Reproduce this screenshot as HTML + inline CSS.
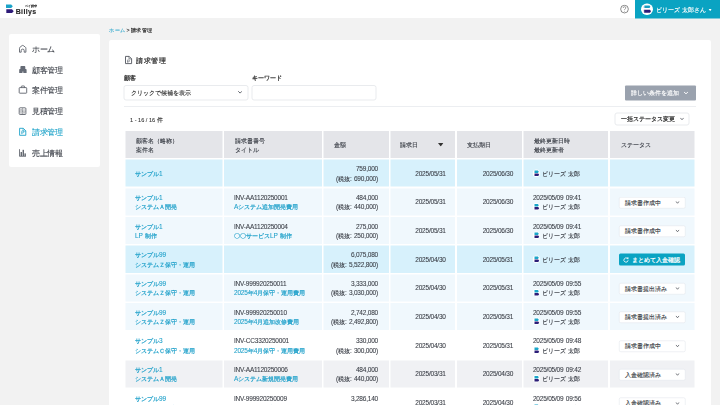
<!DOCTYPE html>
<html><head><meta charset="utf-8">
<style>
*{box-sizing:border-box;margin:0;padding:0}
html,body{width:720px;height:405px;overflow:hidden}
#root{position:absolute;left:0;top:0;width:1440px;height:810px;transform:scale(0.5);transform-origin:0 0}
body{background:#f2f2f2;font-family:"Liberation Sans",sans-serif;color:#3b3f47;position:relative;-webkit-text-stroke:0.16px currentColor}
i.j{font-style:normal;-webkit-text-stroke:0.28px currentColor}
.abs{position:absolute}
#hdr{left:0;top:0;width:1440px;height:36px;background:#fff;box-shadow:0 0.6px 3px rgba(0,0,0,.035)}
#user{left:1270px;top:0;width:170px;height:37px;background:#0aa3c2;color:#fff}
#side{left:18px;top:68px;width:182px;height:266px;background:#fff;border-radius:4px}
.nav{position:absolute;left:20px;height:20px;font-size:15px;line-height:20px;color:#3b3f47;white-space:nowrap}
.nav svg{position:absolute;left:0;top:3px}
.nav span{position:absolute;left:26.4px;top:0}
.nav i.j{-webkit-text-stroke:0.2px currentColor}
#crumb{left:218px;top:51.2px;font-size:10.6px;line-height:18px;white-space:nowrap;color:#333}
#crumb i.j{-webkit-text-stroke:0.32px currentColor}
#crumb b i.j{-webkit-text-stroke:0.2px currentColor}
#crumb b{color:#2ba6cb;font-weight:normal}
#main{left:218px;top:80px;width:1204px;height:760px;background:#fff;border-radius:4px}
.lbl{font-size:11.6px;line-height:16px;color:#3a3a3a;-webkit-text-stroke:0.5px currentColor;white-space:nowrap}
.box{background:#fff;border:2px solid #e9ebee;border-radius:5px}
.ttl i.j{-webkit-text-stroke:0.4px currentColor}
.lbl i.j{-webkit-text-stroke:0.6px currentColor}
.t{position:absolute;white-space:nowrap}
.row{position:absolute;left:250.6px;width:1138.2px}
.cell{position:absolute;top:0;height:100%}
.c1{left:0;width:194.8px}
.c2{left:197.8px;width:195.2px}
.c3{left:396.4px;width:130.6px}
.c4{left:530.2px;width:129.4px}
.c5{left:663.2px;width:130.6px}
.c6{left:796.8px;width:168.8px}
.c7{left:969px;width:169.2px}
.hd .cell{background:#e4e5e9}
.g1 .cell{background:#d7f1fc}
.g2 .cell{background:#f0f8fd}
.g3 .cell{background:#fff}
.g4 .cell{background:#f0f1f4}
.tx{position:absolute;font-size:13px;line-height:18.8px;white-space:nowrap;letter-spacing:-0.4px;word-spacing:1.6px}
.tx i.j{font-size:12px;letter-spacing:0}
.tl{color:#20a1ca}
.tl i.j{-webkit-text-stroke:0.4px currentColor}
.r{text-align:right}
.sel{position:absolute;left:18.2px;width:132.8px;height:23px;background:#fff;border:1.8px solid #dfe3e8;border-radius:3.6px;font-size:12px;line-height:20.6px;color:#3b3f47;padding-left:12px;white-space:nowrap}
.sel svg{position:absolute;right:11px;top:8.4px}
.av{position:absolute}
.sel2 i.j{-webkit-text-stroke:0.44px currentColor}
.btx i.j{-webkit-text-stroke:0.4px currentColor}
.sel i.j{-webkit-text-stroke:0.28px currentColor}
</style></head><body><div id="root">

<div id="hdr" class="abs">
  <svg class="abs" style="left:0;top:0" width="30" height="30" viewBox="0 0 15 15">
    <path d="M6 4.4 H11.2 L12.8 6.25 L11.2 8.1 H6.3 Q6 8.1 6 7.8Z" fill="#1aa3c8"/>
    <path d="M6.3 9.3 H12 L13.7 11.2 L12 13.1 H6.6 Q6.3 13.1 6.3 12.8Z" fill="#2d1a78"/>
  </svg>
  <div class="t" style="left:31.4px;top:13.8px;font-size:14px;line-height:16px;font-weight:bold;color:#222;letter-spacing:0.72px">Billys</div>
  <div class="t" style="left:50px;top:9.2px;font-size:6px;line-height:7px;color:#222;-webkit-text-stroke:0.1px #222"><i class="j">ベイ請求</i></div>
  <svg class="abs" style="left:1239.2px;top:9.2px" width="20" height="20" viewBox="0 0 10 10">
    <circle cx="5" cy="4.6" r="3.85" fill="none" stroke="#666" stroke-width="0.75"/>
    <path d="M3.7 3.5 Q3.7 2.2 5 2.2 Q6.3 2.2 6.3 3.4 Q6.3 4.1 5.5 4.5 Q5 4.8 5 5.6" fill="none" stroke="#666" stroke-width="0.6"/>
    <circle cx="5" cy="6.7" r="0.42" fill="#666"/>
  </svg>
</div>
<div id="user" class="abs">
  <div class="abs" style="left:12px;top:6.6px;width:23.6px;height:23.6px;border-radius:50%;background:#fff"></div>
  <svg class="abs" style="left:0;top:0" width="36" height="36" viewBox="0 0 18 18">
    <path d="M9.4 5.4 H14.5 L15.4 6.75 L14.5 8.1 H9.4Z" fill="#1a9dc0"/>
    <path d="M9.1 9.7 H15 L16 11.2 L15 12.7 H9.1Z" fill="#2d1a78"/>
    <path d="M8.4 6.3 H9.5 V8.1 H8.6Z M8.3 9.7 H9.2 V12.4 H8.7Z" fill="#8fb4c6" opacity=".6"/>
  </svg>
  <div class="t" style="left:41.2px;top:11.6px;font-size:11.5px;line-height:16px;color:#fff;-webkit-text-stroke:0.6px #fff"><i class="j">ビリーズ</i><span style="display:inline-block;width:5.2px"></span><i class="j">太郎さん</i></div>
  <svg class="abs" style="left:146.6px;top:18px" width="6.8" height="4.2" viewBox="0 0 4 2.5"><path d="M0 0H4L2 2.5Z" fill="#fff"/></svg>
</div>

<div id="side" class="abs">
  <div class="nav" style="top:21px"><span><i class="j">ホーム</i></span></div>
  <div class="nav" style="top:62.4px"><span><i class="j">顧客管理</i></span></div>
  <div class="nav" style="top:102.8px"><span><i class="j">案件管理</i></span></div>
  <div class="nav" style="top:145.4px"><span><i class="j">見積管理</i></span></div>
  <div class="nav" style="top:186.8px;color:#1ea3c9"><span><i class="j">請求管理</i></span></div>
  <div class="nav" style="top:228.6px"><span><i class="j">売上情報</i></span></div>
</div>

<svg class="abs" style="left:0;top:0" width="80" height="340" viewBox="0 0 40 170">
  <path d="M19.5 52.2 V48.3 Q19.5 47.6 20.1 47.1 L22.1 45.6 Q22.7 45.2 23.3 45.6 L25.3 47.1 Q25.9 47.6 25.9 48.3 V52.2 H24.2 V50.6 Q24.2 49.1 22.7 49.1 Q21.2 49.1 21.2 50.6 V52.2Z" fill="none" stroke="#555a63" stroke-width="0.85" stroke-linejoin="round"/>
  <path d="M20.4 69 V66.9 Q20.4 66.1 21.2 66.1 H24.5 Q25.3 66.1 25.3 66.9 V69 H25.8 Q26.6 69 26.6 69.8 V73 H23.3 V71.6 H22.5 V73 H19.2 V69.8 Q19.2 69 20 69Z" fill="#656b76"/>
  <rect x="19.2" y="87.6" width="7.5" height="5.6" rx="0.6" fill="none" stroke="#555a63" stroke-width="0.85"/>
  <path d="M21.4 87.6 V86.4 Q21.4 86 21.8 86 H24.1 Q24.5 86 24.5 86.4 V87.6" fill="none" stroke="#555a63" stroke-width="0.85"/>
  <rect x="19.2" y="107.8" width="6.7" height="6.7" rx="0.9" fill="none" stroke="#555a63" stroke-width="0.85"/>
  <path d="M22.55 108.2 V114.1 M19.6 111.15 H25.5" stroke="#555a63" stroke-width="0.5"/>
  <path d="M20.4 109.8 H21.7 M21.05 109.15 V110.45 M23.4 109.8 H24.7 M20.4 112.6 L21.7 113.3 M21.7 112.6 L20.4 113.3 M23.4 112.5 H24.7 M23.4 113.2 H24.7" stroke="#555a63" stroke-width="0.45"/>
  <path d="M19.6 128.3 H23.3 L25.8 130.8 V135.3 H19.6Z" fill="none" stroke="#1ea3c9" stroke-width="0.9" stroke-linejoin="round"/>
  <path d="M23.1 128.3 V131 H25.8" fill="none" stroke="#1ea3c9" stroke-width="0.7"/>
  <path d="M21.8 134.2 V130.9 H22.9 Q23.9 130.9 23.9 131.9 Q23.9 132.9 22.9 132.9 H21.4" fill="none" stroke="#1ea3c9" stroke-width="0.65"/>
  <path d="M19.5 149.2 V156.3 H26" fill="none" stroke="#555a63" stroke-width="0.8"/>
  <rect x="20.6" y="152" width="1.3" height="4" fill="#555a63"/>
  <rect x="22.6" y="149.8" width="1.3" height="6.2" fill="#555a63"/>
  <rect x="24.5" y="153.4" width="1.3" height="2.6" fill="#555a63"/>
</svg>
<div id="crumb" class="abs"><b><i class="j">ホーム</i></b><span style="padding:0 2.2px 0 2px">&gt;</span><i class="j">請求管理</i></div>

<div id="main" class="abs"></div>

<!-- main content, absolute page coords -->
<svg class="abs" style="left:248px;top:110px" width="18" height="20" viewBox="0 0 9 10"><path d="M1.5 1.4 H5.2 L7.6 3.8 V8.6 H1.5Z" fill="none" stroke="#5a5e66" stroke-width="0.95" stroke-linejoin="round"/><path d="M5 1.4 V3.9 H7.6" fill="none" stroke="#5a5e66" stroke-width="0.7"/><path d="M3.6 7.6 V4.9 H4.5 Q5.5 4.9 5.5 5.85 Q5.5 6.8 4.5 6.8 H3.3" fill="none" stroke="#5a5e66" stroke-width="0.6"/></svg>
<div class="t ttl" style="left:272px;top:111.2px;font-size:14.8px;line-height:20px;color:#333"><i class="j">請求管理</i></div>

<div class="t lbl" style="left:247.6px;top:148px"><i class="j">顧客</i></div>
<div class="abs box" style="left:247.2px;top:170.4px;width:250px;height:30.4px"></div>
<div class="t" style="left:261.2px;top:177px;font-size:12.4px;line-height:18px;color:#333"><i class="j">クリックで候補を表示</i></div>
<svg class="abs" style="left:475.6px;top:182.4px" width="8.4" height="5.6" viewBox="0 0 4.2 2.8"><path d="M0.5 0.5 L2.1 2.1 L3.7 0.5" fill="none" stroke="#4a4f58" stroke-width="0.85" stroke-linecap="round" stroke-linejoin="round"/></svg>

<div class="t lbl" style="left:503px;top:148px"><i class="j">キーワード</i></div>
<div class="abs box" style="left:502.6px;top:170.4px;width:250.6px;height:30.4px"></div>

<div class="abs" style="left:1250.4px;top:171.2px;width:141.2px;height:30px;background:#9aa2ae;border-radius:2px"></div>
<div class="t" style="left:1261.2px;top:177.4px;font-size:12.2px;line-height:18px;color:#fff"><i class="j">詳しい条件を追加</i></div>
<svg class="abs" style="left:1367px;top:183.2px" width="10" height="6" viewBox="0 0 5 3"><path d="M0.8 0.7 L2.5 2.3 L4.2 0.7" fill="none" stroke="#fff" stroke-width="0.95" stroke-linecap="round" stroke-linejoin="round"/></svg>

<div class="abs" style="left:248.4px;top:212px;width:1143.2px;height:1.6px;background:#eceef1"></div>

<div class="t" style="left:260px;top:229.6px;font-size:11.2px;line-height:18px;color:#333">1 - 16 / 16 <i class="j">件</i></div>
<div class="abs box" style="left:1228.6px;top:225.4px;width:150.4px;height:25.8px"></div>
<div class="t sel2" style="left:1241.2px;top:229px;font-size:12px;line-height:18px;color:#333"><i class="j">一括ステータス変更</i></div>
<svg class="abs" style="left:1360.4px;top:235.2px" width="8" height="6" viewBox="0 0 4 3"><path d="M0.55 0.6 L2 2.25 L3.45 0.6" fill="none" stroke="#3b3f47" stroke-width="0.7" stroke-linecap="round" stroke-linejoin="round"/></svg>

<div id="tbl">
<div class="row hd" style="top:262px;height:54px">
<div class="cell c1"><div class="tx" style="left:21px;top:10px"><i class="j">顧客名（略称）</i><br><i class="j">案件名</i></div></div>
<div class="cell c2"><div class="tx" style="left:22px;top:10px"><i class="j">請求書番号</i><br><i class="j">タイトル</i></div></div>
<div class="cell c3"><div class="tx" style="left:21px;top:18px"><i class="j">金額</i></div></div>
<div class="cell c4"><div class="tx" style="left:20px;top:18px"><i class="j">請求日</i></div><svg style="position:absolute;left:95.6px;top:24px" width="10.8" height="7.2" viewBox="0 0 5.4 3.6"><path d="M0 0 H5.4 L2.7 3.4Z" fill="#333"/></svg></div>
<div class="cell c5"><div class="tx" style="left:21px;top:18px"><i class="j">支払期日</i></div></div>
<div class="cell c6"><div class="tx" style="left:21px;top:10px"><i class="j">最終更新日時</i><br><i class="j">最終更新者</i></div></div>
<div class="cell c7"><div class="tx" style="left:22px;top:18px"><i class="j">ステータス</i></div></div>
</div>
<div class="row g1" style="top:319.2px;height:54.2px">
<div class="cell c1"><div class="tx tl" style="left:19.4px;top:18.4px"><i class="j">サンプル</i>1</div></div>
<div class="cell c2"></div>
<div class="cell c3"><div class="tx r" style="right:21.6px;top:9.6px">759,000<br>(<i class="j">税抜</i>: 690,000)</div></div>
<div class="cell c4"><div class="tx r" style="right:18.6px;top:18.4px">2025/05/31</div></div>
<div class="cell c5"><div class="tx r" style="right:18px;top:18.4px">2025/06/30</div></div>
<div class="cell c6"><div class="tx" style="left:36.8px;top:18.4px"><i class="j">ビリーズ</i><span style="display:inline-block;width:4.8px"></span><i class="j">太郎</i></div><svg class="av" style="left:17.8px;top:19px" width="16" height="18" viewBox="0 0 8 9"><circle cx="3.9" cy="4.3" r="3.8" fill="#fff"/><path d="M2 1.6 H5.4 L6.3 2.75 L5.4 3.9 H2Z" fill="#1aa6c9"/><path d="M2 4.5 H5.7 L6.7 5.75 L5.7 7 H2Z" fill="#2c1e78"/></svg></div>
<div class="cell c7"></div>
</div>
<div class="row g2" style="top:376.6px;height:54.2px">
<div class="cell c1"><div class="tx tl" style="left:19.4px;top:9.6px"><i class="j">サンプル</i>1<br><i class="j">システムＡ開発</i></div></div>
<div class="cell c2"><div class="tx" style="left:19.6px;top:9.6px">INV-AA1120250001<br><span class="tl">A<i class="j">システム追加開発費用</i></span></div></div>
<div class="cell c3"><div class="tx r" style="right:21.6px;top:9.6px">484,000<br>(<i class="j">税抜</i>: 440,000)</div></div>
<div class="cell c4"><div class="tx r" style="right:18.6px;top:18.4px">2025/05/31</div></div>
<div class="cell c5"><div class="tx r" style="right:18px;top:18.4px">2025/06/30</div></div>
<div class="cell c6"><div class="tx" style="left:18.4px;top:9.6px">2025/05/09 09:41<br><span style="padding-left:18.4px"><i class="j">ビリーズ</i></span><span style="display:inline-block;width:4.8px"></span><i class="j">太郎</i></div><svg class="av" style="left:17.4px;top:28px" width="16" height="18" viewBox="0 0 8 9"><circle cx="3.9" cy="4.3" r="3.8" fill="#fff"/><path d="M2 1.6 H5.4 L6.3 2.75 L5.4 3.9 H2Z" fill="#1aa6c9"/><path d="M2 4.5 H5.7 L6.7 5.75 L5.7 7 H2Z" fill="#2c1e78"/></svg></div>
<div class="cell c7"><div class="sel" style="top:17px"><i class="j">請求書作成中</i><svg style="position:absolute;right:10.8px;top:7.2px" width="8" height="6" viewBox="0 0 4 3"><path d="M0.55 0.6 L2 2.25 L3.45 0.6" fill="none" stroke="#3b3f47" stroke-width="0.7" stroke-linecap="round" stroke-linejoin="round"/></svg></div></div>
</div>
<div class="row g2" style="top:434px;height:54.2px">
<div class="cell c1"><div class="tx tl" style="left:19.4px;top:9.6px"><i class="j">サンプル</i>1<br>LP <i class="j">制作</i></div></div>
<div class="cell c2"><div class="tx" style="left:19.6px;top:9.6px">INV-AA1120250004<br><span class="tl"><i class="j">〇〇サービス</i>LP <i class="j">制作</i></span></div></div>
<div class="cell c3"><div class="tx r" style="right:21.6px;top:9.6px">275,000<br>(<i class="j">税抜</i>: 250,000)</div></div>
<div class="cell c4"><div class="tx r" style="right:18.6px;top:18.4px">2025/05/31</div></div>
<div class="cell c5"><div class="tx r" style="right:18px;top:18.4px">2025/06/30</div></div>
<div class="cell c6"><div class="tx" style="left:18.4px;top:9.6px">2025/05/09 09:41<br><span style="padding-left:18.4px"><i class="j">ビリーズ</i></span><span style="display:inline-block;width:4.8px"></span><i class="j">太郎</i></div><svg class="av" style="left:17.4px;top:28px" width="16" height="18" viewBox="0 0 8 9"><circle cx="3.9" cy="4.3" r="3.8" fill="#fff"/><path d="M2 1.6 H5.4 L6.3 2.75 L5.4 3.9 H2Z" fill="#1aa6c9"/><path d="M2 4.5 H5.7 L6.7 5.75 L5.7 7 H2Z" fill="#2c1e78"/></svg></div>
<div class="cell c7"><div class="sel" style="top:17px"><i class="j">請求書作成中</i><svg style="position:absolute;right:10.8px;top:7.2px" width="8" height="6" viewBox="0 0 4 3"><path d="M0.55 0.6 L2 2.25 L3.45 0.6" fill="none" stroke="#3b3f47" stroke-width="0.7" stroke-linecap="round" stroke-linejoin="round"/></svg></div></div>
</div>
<div class="row g1" style="top:491.4px;height:54.2px">
<div class="cell c1"><div class="tx tl" style="left:19.4px;top:9.6px"><i class="j">サンプル</i>99<br><i class="j">システムＺ保守・運用</i></div></div>
<div class="cell c2"></div>
<div class="cell c3"><div class="tx r" style="right:21.6px;top:9.6px">6,075,080<br>(<i class="j">税抜</i>: 5,522,800)</div></div>
<div class="cell c4"><div class="tx r" style="right:18.6px;top:18.4px">2025/04/30</div></div>
<div class="cell c5"><div class="tx r" style="right:18px;top:18.4px">2025/05/31</div></div>
<div class="cell c6"><div class="tx" style="left:36.8px;top:18.4px"><i class="j">ビリーズ</i><span style="display:inline-block;width:4.8px"></span><i class="j">太郎</i></div><svg class="av" style="left:17.8px;top:19px" width="16" height="18" viewBox="0 0 8 9"><circle cx="3.9" cy="4.3" r="3.8" fill="#fff"/><path d="M2 1.6 H5.4 L6.3 2.75 L5.4 3.9 H2Z" fill="#1aa6c9"/><path d="M2 4.5 H5.7 L6.7 5.75 L5.7 7 H2Z" fill="#2c1e78"/></svg></div>
<div class="cell c7"><div style="position:absolute;left:18.4px;top:15.2px;width:132px;height:24.6px;background:#0aa3c2;border-radius:3px"></div><svg style="position:absolute;left:26.8px;top:22.2px" width="12" height="12" viewBox="0 0 6 6"><path d="M4.5 1.5 A2.15 2.15 0 1 0 5.1 3.6" fill="none" stroke="#fff" stroke-width="0.8" stroke-linecap="round"/><path d="M3.5 0.6 L5.6 0.5 L5.2 2.6Z" fill="#fff"/></svg><div class="tx btx" style="left:44.8px;top:18.4px;color:#fff"><i class="j">まとめて入金確認</i></div></div>
</div>
<div class="row g2" style="top:548.8px;height:54.2px">
<div class="cell c1"><div class="tx tl" style="left:19.4px;top:9.6px"><i class="j">サンプル</i>99<br><i class="j">システムＺ保守・運用</i></div></div>
<div class="cell c2"><div class="tx" style="left:19.6px;top:9.6px">INV-999920250011<br><span class="tl">2025<i class="j">年</i>4<i class="j">月保守・運用費用</i></span></div></div>
<div class="cell c3"><div class="tx r" style="right:21.6px;top:9.6px">3,333,000<br>(<i class="j">税抜</i>: 3,030,000)</div></div>
<div class="cell c4"><div class="tx r" style="right:18.6px;top:18.4px">2025/04/30</div></div>
<div class="cell c5"><div class="tx r" style="right:18px;top:18.4px">2025/05/31</div></div>
<div class="cell c6"><div class="tx" style="left:18.4px;top:9.6px">2025/05/09 09:55<br><span style="padding-left:18.4px"><i class="j">ビリーズ</i></span><span style="display:inline-block;width:4.8px"></span><i class="j">太郎</i></div><svg class="av" style="left:17.4px;top:28px" width="16" height="18" viewBox="0 0 8 9"><circle cx="3.9" cy="4.3" r="3.8" fill="#fff"/><path d="M2 1.6 H5.4 L6.3 2.75 L5.4 3.9 H2Z" fill="#1aa6c9"/><path d="M2 4.5 H5.7 L6.7 5.75 L5.7 7 H2Z" fill="#2c1e78"/></svg></div>
<div class="cell c7"><div class="sel" style="top:17px"><i class="j">請求書提出済み</i><svg style="position:absolute;right:10.8px;top:7.2px" width="8" height="6" viewBox="0 0 4 3"><path d="M0.55 0.6 L2 2.25 L3.45 0.6" fill="none" stroke="#3b3f47" stroke-width="0.7" stroke-linecap="round" stroke-linejoin="round"/></svg></div></div>
</div>
<div class="row g2" style="top:606.2px;height:54.2px">
<div class="cell c1"><div class="tx tl" style="left:19.4px;top:9.6px"><i class="j">サンプル</i>99<br><i class="j">システムＺ保守・運用</i></div></div>
<div class="cell c2"><div class="tx" style="left:19.6px;top:9.6px">INV-999920250010<br><span class="tl">2025<i class="j">年</i>4<i class="j">月追加改修費用</i></span></div></div>
<div class="cell c3"><div class="tx r" style="right:21.6px;top:9.6px">2,742,080<br>(<i class="j">税抜</i>: 2,492,800)</div></div>
<div class="cell c4"><div class="tx r" style="right:18.6px;top:18.4px">2025/04/30</div></div>
<div class="cell c5"><div class="tx r" style="right:18px;top:18.4px">2025/05/31</div></div>
<div class="cell c6"><div class="tx" style="left:18.4px;top:9.6px">2025/05/09 09:55<br><span style="padding-left:18.4px"><i class="j">ビリーズ</i></span><span style="display:inline-block;width:4.8px"></span><i class="j">太郎</i></div><svg class="av" style="left:17.4px;top:28px" width="16" height="18" viewBox="0 0 8 9"><circle cx="3.9" cy="4.3" r="3.8" fill="#fff"/><path d="M2 1.6 H5.4 L6.3 2.75 L5.4 3.9 H2Z" fill="#1aa6c9"/><path d="M2 4.5 H5.7 L6.7 5.75 L5.7 7 H2Z" fill="#2c1e78"/></svg></div>
<div class="cell c7"><div class="sel" style="top:17px"><i class="j">請求書提出済み</i><svg style="position:absolute;right:10.8px;top:7.2px" width="8" height="6" viewBox="0 0 4 3"><path d="M0.55 0.6 L2 2.25 L3.45 0.6" fill="none" stroke="#3b3f47" stroke-width="0.7" stroke-linecap="round" stroke-linejoin="round"/></svg></div></div>
</div>
<div class="row g3" style="top:663.6px;height:54.2px">
<div class="cell c1"><div class="tx tl" style="left:19.4px;top:9.6px"><i class="j">サンプル</i>3<br><i class="j">システムＣ保守・運用</i></div></div>
<div class="cell c2"><div class="tx" style="left:19.6px;top:9.6px">INV-CC3320250001<br><span class="tl">2025<i class="j">年</i>4<i class="j">月保守・運用費用</i></span></div></div>
<div class="cell c3"><div class="tx r" style="right:21.6px;top:9.6px">330,000<br>(<i class="j">税抜</i>: 300,000)</div></div>
<div class="cell c4"><div class="tx r" style="right:18.6px;top:18.4px">2025/04/30</div></div>
<div class="cell c5"><div class="tx r" style="right:18px;top:18.4px">2025/05/31</div></div>
<div class="cell c6"><div class="tx" style="left:18.4px;top:9.6px">2025/05/09 09:48<br><span style="padding-left:18.4px"><i class="j">ビリーズ</i></span><span style="display:inline-block;width:4.8px"></span><i class="j">太郎</i></div><svg class="av" style="left:17.4px;top:28px" width="16" height="18" viewBox="0 0 8 9"><circle cx="3.9" cy="4.3" r="3.8" fill="#fff"/><path d="M2 1.6 H5.4 L6.3 2.75 L5.4 3.9 H2Z" fill="#1aa6c9"/><path d="M2 4.5 H5.7 L6.7 5.75 L5.7 7 H2Z" fill="#2c1e78"/></svg></div>
<div class="cell c7"><div class="sel" style="top:17px"><i class="j">請求書作成中</i><svg style="position:absolute;right:10.8px;top:7.2px" width="8" height="6" viewBox="0 0 4 3"><path d="M0.55 0.6 L2 2.25 L3.45 0.6" fill="none" stroke="#3b3f47" stroke-width="0.7" stroke-linecap="round" stroke-linejoin="round"/></svg></div></div>
</div>
<div class="row g4" style="top:721px;height:54.2px">
<div class="cell c1"><div class="tx tl" style="left:19.4px;top:9.6px"><i class="j">サンプル</i>1<br><i class="j">システムＡ開発</i></div></div>
<div class="cell c2"><div class="tx" style="left:19.6px;top:9.6px">INV-AA1120250006<br><span class="tl">A<i class="j">システム新規開発費用</i></span></div></div>
<div class="cell c3"><div class="tx r" style="right:21.6px;top:9.6px">484,000<br>(<i class="j">税抜</i>: 440,000)</div></div>
<div class="cell c4"><div class="tx r" style="right:18.6px;top:18.4px">2025/03/31</div></div>
<div class="cell c5"><div class="tx r" style="right:18px;top:18.4px">2025/04/30</div></div>
<div class="cell c6"><div class="tx" style="left:18.4px;top:9.6px">2025/05/09 09:42<br><span style="padding-left:18.4px"><i class="j">ビリーズ</i></span><span style="display:inline-block;width:4.8px"></span><i class="j">太郎</i></div><svg class="av" style="left:17.4px;top:28px" width="16" height="18" viewBox="0 0 8 9"><circle cx="3.9" cy="4.3" r="3.8" fill="#fff"/><path d="M2 1.6 H5.4 L6.3 2.75 L5.4 3.9 H2Z" fill="#1aa6c9"/><path d="M2 4.5 H5.7 L6.7 5.75 L5.7 7 H2Z" fill="#2c1e78"/></svg></div>
<div class="cell c7"><div class="sel" style="top:17px"><i class="j">入金確認済み</i><svg style="position:absolute;right:10.8px;top:7.2px" width="8" height="6" viewBox="0 0 4 3"><path d="M0.55 0.6 L2 2.25 L3.45 0.6" fill="none" stroke="#3b3f47" stroke-width="0.7" stroke-linecap="round" stroke-linejoin="round"/></svg></div></div>
</div>
<div class="row g3" style="top:778.4px;height:54.2px">
<div class="cell c1"><div class="tx tl" style="left:19.4px;top:9.6px"><i class="j">サンプル</i>99<br><i class="j">システムＺ保守・運用</i></div></div>
<div class="cell c2"><div class="tx" style="left:19.6px;top:9.6px">INV-999920250009<br><span class="tl">2025<i class="j">年</i>3<i class="j">月保守・運用費用</i></span></div></div>
<div class="cell c3"><div class="tx r" style="right:21.6px;top:9.6px">3,286,140<br>(<i class="j">税抜</i>: 2,987,400)</div></div>
<div class="cell c4"><div class="tx r" style="right:18.6px;top:18.4px">2025/03/31</div></div>
<div class="cell c5"><div class="tx r" style="right:18px;top:18.4px">2025/04/30</div></div>
<div class="cell c6"><div class="tx" style="left:18.4px;top:9.6px">2025/05/09 09:56<br><span style="padding-left:18.4px"><i class="j">ビリーズ</i></span><span style="display:inline-block;width:4.8px"></span><i class="j">太郎</i></div><svg class="av" style="left:17.4px;top:28px" width="16" height="18" viewBox="0 0 8 9"><circle cx="3.9" cy="4.3" r="3.8" fill="#fff"/><path d="M2 1.6 H5.4 L6.3 2.75 L5.4 3.9 H2Z" fill="#1aa6c9"/><path d="M2 4.5 H5.7 L6.7 5.75 L5.7 7 H2Z" fill="#2c1e78"/></svg></div>
<div class="cell c7"><div class="sel" style="top:17px"><i class="j">入金確認済み</i><svg style="position:absolute;right:10.8px;top:7.2px" width="8" height="6" viewBox="0 0 4 3"><path d="M0.55 0.6 L2 2.25 L3.45 0.6" fill="none" stroke="#3b3f47" stroke-width="0.7" stroke-linecap="round" stroke-linejoin="round"/></svg></div></div>
</div>
</div>

</div></body></html>
